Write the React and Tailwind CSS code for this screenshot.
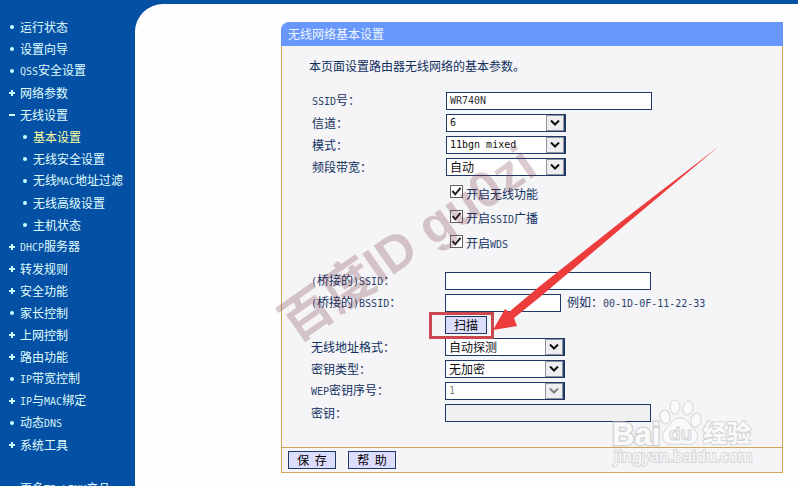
import React from "react";

const MENU = [
  { label: "运行状态", mark: "dot" },
  { label: "设置向导", mark: "dot" },
  { label: "QSS安全设置", mark: "dot" },
  { label: "网络参数", mark: "plus" },
  { label: "无线设置", mark: "minus" },
  { label: "基本设置", mark: "dot", sub: true, current: true },
  { label: "无线安全设置", mark: "dot", sub: true },
  { label: "无线MAC地址过滤", mark: "dot", sub: true },
  { label: "无线高级设置", mark: "dot", sub: true },
  { label: "主机状态", mark: "dot", sub: true },
  { label: "DHCP服务器", mark: "plus" },
  { label: "转发规则", mark: "plus" },
  { label: "安全功能", mark: "plus" },
  { label: "家长控制", mark: "dot" },
  { label: "上网控制", mark: "plus" },
  { label: "路由功能", mark: "plus" },
  { label: "IP带宽控制", mark: "dot" },
  { label: "IP与MAC绑定", mark: "plus" },
  { label: "动态DNS", mark: "dot" },
  { label: "系统工具", mark: "plus" },
];

// Latin runs are set in a half-width monospace beside the full-width Chinese.
function Mixed({ children }) {
  return children.split(/([\x21-\x7e]+)/).map((part, i) =>
    i % 2 ? (
      <span key={i} className="font-['DejaVu_Sans_Mono',monospace] text-[10px] opacity-90">{part}</span>
    ) : (
      part
    )
  );
}

function Mark({ type }) {
  return (
    <svg viewBox="0 0 8 8" className="h-2 w-2 shrink-0" fill="#c8ffff" aria-hidden="true">
      {type === "dot" && <circle cx="4" cy="4" r="2" />}
      {type !== "dot" && <rect x="1" y="3" width="6" height="2" />}
      {type === "plus" && <rect x="3" y="1" width="2" height="6" />}
    </svg>
  );
}

function Sidebar() {
  return (
    <nav className="w-[135px] shrink-0 pt-4">
      <ul>
        {MENU.map((item) => (
          <li key={item.label} className={item.sub ? "pl-[21px]" : "pl-2"}>
            <a
              href="#"
              className={
                "flex h-[22px] items-center gap-1 whitespace-nowrap " +
                (item.current ? "text-[#ffffa0]" : "text-[#e0ffff]")
              }
            >
              <Mark type={item.mark} />
              <span><Mixed>{item.label}</Mixed></span>
            </a>
          </li>
        ))}
      </ul>
      <a href="#" className="mt-[22px] flex h-[22px] items-center pl-5 whitespace-nowrap text-[#e0ffff]">
        <span><Mixed>更多TP-LINK产品</Mixed></span>
      </a>
    </nav>
  );
}

function Row({ id, label, children }) {
  return (
    <div className="flex h-[22px] items-center">
      <label htmlFor={id} className="w-[134px] shrink-0"><Mixed>{label}</Mixed></label>
      {children}
    </div>
  );
}

function Select({ id, value, disabled, latin }) {
  return (
    <span className="relative block h-[18px] w-[120px]">
      <select
        id={id}
        disabled={disabled}
        className={
          "block h-full w-full appearance-none border border-r-2 border-[#203868] bg-white pl-[3px] leading-4 opacity-100 " +
          (latin ? "font-['DejaVu_Sans_Mono',monospace] text-[10px] " : "") +
          (disabled ? "text-[#808080]" : "text-[#101010]")
        }
      >
        <option>{value}</option>
      </select>
      <span className="pointer-events-none absolute top-px right-0.5 bottom-px flex w-[18px] items-center justify-center border border-[#8c949c] bg-[#eeeef0]">
        <svg
          viewBox="0 0 10 6"
          className="h-1.5 w-2.5"
          fill="none"
          stroke={disabled ? "#808080" : "#101010"}
          strokeWidth="2"
        >
          <path d="M1 0.5 5 4.5 9 0.5" />
        </svg>
      </span>
    </span>
  );
}

function Check({ id, label }) {
  return (
    <div className="flex h-[25px] items-center gap-[3px] pl-[138px]">
      <span className="relative block h-[13px] w-[13px] -translate-y-0.5">
        <input
          id={id}
          type="checkbox"
          defaultChecked
          className="peer block h-[13px] w-[13px] appearance-none border border-[#606060] bg-white"
        />
        <svg
          viewBox="0 0 13 13"
          className="pointer-events-none absolute inset-0 hidden peer-checked:block"
          fill="none"
          stroke="#202020"
          strokeWidth="2"
        >
          <path d="M2.5 6 5.3 9.3 10.5 2.8" />
        </svg>
      </span>
      <label htmlFor={id}><Mixed>{label}</Mixed></label>
    </div>
  );
}

const BUTTON = "h-[18px] border border-[#203868] bg-[#dcdcfc] text-black leading-4";
const INPUT = "h-[18px] border border-[#203868] px-[3px] font-['DejaVu_Sans_Mono',monospace] text-[10px] text-[#303030]";

function Arrow() {
  return (
    <svg
      viewBox="0 0 230 190"
      className="pointer-events-none absolute bottom-[-3px] left-[47px] z-10 h-[190px] w-[230px]"
      fill="#ec3c3c"
      aria-hidden="true"
    >
      <path d="M1 183 13 162 17 165 48 139 130 74 226 0 133 78 48 150 22 171 25 179Z" />
    </svg>
  );
}

function SiteMark() {
  return (
    <svg
      viewBox="0 0 150 74"
      className="pointer-events-none absolute right-[25px] bottom-px h-[74px] w-[150px] opacity-85"
      fill="#fcfcfc"
      stroke="#d0d0d2"
      strokeWidth="1"
    >
      <text x="4" y="47" fontFamily="Liberation Sans, sans-serif" fontWeight="bold" fontSize="31" paintOrder="stroke" strokeWidth="3">Bai</text>
      <ellipse cx="57" cy="19" rx="5" ry="7" transform="rotate(-12 57 19)" />
      <ellipse cx="67" cy="9" rx="5" ry="7" />
      <ellipse cx="80" cy="10" rx="5" ry="7" transform="rotate(10 80 10)" />
      <ellipse cx="88" cy="22" rx="5" ry="7" transform="rotate(15 88 22)" />
      <path d="M72 20C66 20 63 26 59 30 54 34 53 41 57 44 61 48 67 46 72 46 77 46 83 48 87 44 91 41 90 34 85 30 81 26 78 20 72 20Z" />
      <text x="61" y="42" fontFamily="Liberation Sans, sans-serif" fontWeight="bold" fontSize="19" fill="#f4f4f6">du</text>
      <text x="95" y="44" fontFamily="Noto Sans CJK SC, sans-serif" fontWeight="bold" fontSize="24" paintOrder="stroke" strokeWidth="2">经验</text>
      <text x="6" y="64" fontFamily="Noto Sans, sans-serif" fontSize="16" paintOrder="stroke" strokeWidth="2">jingyan.baidu.com</text>
    </svg>
  );
}

export default function App() {
  return (
    <div className="flex h-screen overflow-hidden bg-[#0450a4] font-['Noto_Sans_CJK_SC',sans-serif] text-[12px] leading-5 text-[#103060]">
      <Sidebar />
      <main className="mt-1 min-w-0 flex-1 rounded-tl-[28px] bg-[#fefefe] pt-[18px] pr-[15px] pl-[146px]">
        <form className="relative" onSubmit={(e) => e.preventDefault()}>
          <h1 className="h-6 rounded-tl-lg bg-[#6898fc] pl-[7px] leading-6 text-[#eef4ff]">无线网络基本设置</h1>
          <div className="border-x border-[#d4a45c] bg-[#f5f4f6] pt-2.5 pb-[23px]">
            <p className="pl-[27px]">本页面设置路由器无线网络的基本参数。</p>
            <div className="mt-3.5 pl-[30px]">
              <Row id="ssid" label="SSID号：">
                <input id="ssid" defaultValue="WR740N" className={INPUT + " w-[206px] bg-white"} />
              </Row>
              <Row id="channel" label="信道："><Select id="channel" value="6" latin /></Row>
              <Row id="mode" label="模式："><Select id="mode" value="11bgn mixed" latin /></Row>
              <Row id="band" label="频段带宽："><Select id="band" value="自动" /></Row>
              <div className="pt-[3px]">
                <Check id="radio" label="开启无线功能" />
                <Check id="broadcast" label="开启SSID广播" />
                <Check id="wds" label="开启WDS" />
              </div>
            </div>
            <div className="mt-3.5 pl-[29px]">
              <Row id="bridge-ssid" label="(桥接的)SSID：">
                <input id="bridge-ssid" className={INPUT + " w-[206px] bg-white"} />
              </Row>
              <Row id="bridge-bssid" label="(桥接的)BSSID：">
                <input id="bridge-bssid" className={INPUT + " w-[116px] bg-white"} />
                <span className="pl-1.5 whitespace-nowrap">例如：<Mixed>00-1D-0F-11-22-33</Mixed></span>
              </Row>
              <div className="flex h-[22px] items-center pl-[134px]">
                <span className="relative block h-[18px]">
                  <button type="button" className={BUTTON + " block w-[42px]"}>扫描</button>
                  <span className="pointer-events-none absolute -top-1 -right-[7px] -bottom-[5px] -left-4 z-10 border-3 border-[#cc4850]" />
                  <Arrow />
                </span>
              </div>
              <Row id="address" label="无线地址格式："><Select id="address" value="自动探测" /></Row>
              <Row id="key-type" label="密钥类型："><Select id="key-type" value="无加密" /></Row>
              <Row id="wep" label="WEP密钥序号："><Select id="wep" value="1" latin disabled /></Row>
              <Row id="key" label="密钥：">
                <input id="key" disabled className={INPUT + " w-[206px] bg-[#f0f0f0]"} />
              </Row>
            </div>
          </div>
          <div className="flex gap-3 border border-[#d4a45c] bg-[#f5f4f6] px-1.5 pt-[3px] pb-[3px]">
            <button type="submit" className={BUTTON + " w-12"}>保&nbsp;&nbsp;存</button>
            <button type="button" className={BUTTON + " w-12"}>帮&nbsp;&nbsp;助</button>
          </div>
          <div className="pointer-events-none absolute top-[192px] left-[-43px] w-[340px] -rotate-[35deg] text-center font-['Liberation_Sans','Noto_Sans_CJK_SC',sans-serif] text-[51px] leading-[60px] font-bold whitespace-nowrap text-[#703040]/25">
            百度ID gu0zi
          </div>
          <SiteMark />
        </form>
      </main>
    </div>
  );
}
